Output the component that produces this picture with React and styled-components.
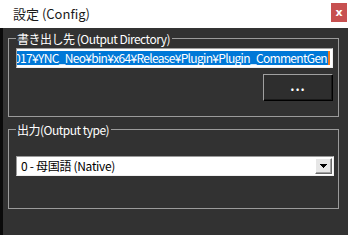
import React from "react";
import styled, { createGlobalStyle } from "styled-components";

const Global = createGlobalStyle`
  html, body { margin: 0; padding: 0; background: #323232; }
  body { width: 348px; height: 235px; overflow: hidden; }
  * { box-sizing: border-box; }
`;

const UI = `"Noto Sans CJK JP", "Noto Sans", sans-serif`;

const Window = styled.div`
  width: 348px;
  height: 235px;
  display: flex;
  flex-direction: column;
  font-family: ${UI};
`;

const TitleBar = styled.div`
  height: 28px;
  background: #ffffff;
  display: flex;
  align-items: center;
  justify-content: space-between;
  padding-left: 13px;
  padding-right: 1px;
`;

const TitleText = styled.span`
  font-size: 13px;
  color: #1a1a1a;
  line-height: 1;
  margin-top: -2px;
`;

const CloseButton = styled.div`
  width: 16px;
  height: 19px;
  margin-top: -4px;
  background: #c75050;
  color: #fff;
  font: bold 11px "DejaVu Sans", sans-serif;
  display: flex;
  align-items: center;
  justify-content: center;
`;

const Body = styled.div`
  flex: 1;
  background: #323232;
  border-left: 3px solid #0a0a0a;
  padding: 3px 9px 0 5px;
  display: flex;
  flex-direction: column;
  gap: 5px;
`;

const Group = styled.fieldset`
  margin: 0;
  min-width: 0;
  border: 1px solid #9b9b9b;
  padding: 0 5px ${(p) => p.$padBottom}px 7px;
  display: flex;
  flex-direction: column;
`;

const Legend = styled.legend`
  padding: 0 2px 0 1px;
  color: #ffffff;
  font-size: 12px;
  letter-spacing: -0.5px;
  line-height: 15px;
  height: 15px;
  white-space: nowrap;
`;

const PathBox = styled.div`
  margin-top: 2px;
  height: 20px;
  background: #fff;
  border: 1px solid;
  border-color: #a0a0a0 #f0f0f0 #f0f0f0 #a0a0a0;
  padding: 2px 2px 2px 0;
  display: flex;
  justify-content: flex-end;
  overflow: hidden;
`;

const Selected = styled.span`
  background: #0078d7;
  color: #fff;
  font-family: "Noto Sans CJK JP", sans-serif;
  font-size: 12px;
  line-height: 14px;
  height: 14px;
  white-space: nowrap;
  letter-spacing: -0.68px;
  padding-right: 1px;
`;

const Caret = styled.span`
  width: 2px;
  height: 14px;
  background: #f07a1c;
  flex: none;
`;

const ButtonRow = styled.div`
  display: flex;
  justify-content: flex-end;
  margin-top: 6px;
`;

const BrowseButton = styled.div`
  width: 70px;
  height: 27px;
  background: #2e2e2e;
  border: 1px solid;
  border-color: #a0a0a0 #000 #000 #a0a0a0;
  box-shadow: inset -1px -1px 0 #1a1a1a;
  color: #fff;
  font-weight: bold;
  font-size: 13px;
  letter-spacing: 1px;
  display: flex;
  align-items: center;
  justify-content: center;
  padding-bottom: 4px;
`;

const Select = styled.div`
  margin-top: 19px;
  margin-right: -1px;
  height: 20px;
  background: #fff;
  border: 1px solid;
  border-color: #9a9a9a #f0f0f0 #f0f0f0 #9a9a9a;
  display: flex;
  align-items: center;
  padding: 0 1px 0 4px;
`;

const SelectText = styled.span`
  flex: 1;
  font-size: 12px;
  letter-spacing: -0.3px;
  line-height: 16px;
  color: #000;
  white-space: nowrap;
`;

const DropButton = styled.div`
  width: 17px;
  height: 16px;
  background: #e6e6e6;
  border: 1px solid;
  border-color: #ffffff #6a6a6a #6a6a6a #ffffff;
  box-shadow: inset -1px -1px 0 #a0a0a0;
  display: flex;
  align-items: center;
  justify-content: center;
`;

export default function App() {
  return (
    <>
      <Global />
      <Window>
        <TitleBar>
          <TitleText>設定 (Config)</TitleText>
          <CloseButton>x</CloseButton>
        </TitleBar>
        <Body>
          <Group $padBottom={15}>
            <Legend>書き出し先 (Output Directory)</Legend>
            <PathBox>
              <Selected>2017¥YNC_Neo¥bin¥x64¥Release¥Plugin¥Plugin_CommentGen</Selected>
              <Caret />
            </PathBox>
            <ButtonRow>
              <BrowseButton>...</BrowseButton>
            </ButtonRow>
          </Group>
          <Group $padBottom={32}>
            <Legend>出力(Output type)</Legend>
            <Select>
              <SelectText>0 - 母国語 (Native)</SelectText>
              <DropButton>
                <svg width="7" height="4" viewBox="0 0 7 4">
                  <path d="M0 0h7v1h-1v1h-1v1h-1v1h-1v-1h-1v-1h-1v-1h-1z" fill="#000" />
                </svg>
              </DropButton>
            </Select>
          </Group>
        </Body>
      </Window>
    </>
  );
}
